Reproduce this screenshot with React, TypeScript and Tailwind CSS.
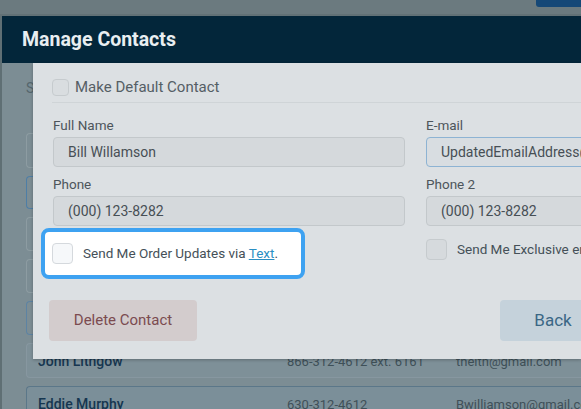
import React from "react"

const font = { fontFamily: "Roboto, 'Liberation Sans', sans-serif" }

function Box({ className = "" }: { className?: string }) {
  return <div className={`shrink-0 rounded-[4px] border ${className}`} />
}

function Field({ label, value, focused }: { label: string; value: string; focused?: boolean }) {
  return (
    <div className="flex flex-col">
      <div className="h-[24px] text-[13.5px] leading-[24px] text-[#4d555b]">{label}</div>
      <div
        className={`h-[30px] rounded-[4px] border px-[14px] text-[14px] leading-[28px] text-[#474f55] whitespace-nowrap overflow-hidden ${
          focused ? "border-[#8db3d3] bg-[#d8dde1]" : "border-[#c3c8cb] bg-[#d5d9dc]"
        }`}
      >
        {value}
      </div>
    </div>
  )
}

function ListRow({
  name,
  phone,
  email,
  className = "",
}: {
  name: string
  phone: string
  email: string
  className?: string
}) {
  return (
    <div
      className={`flex items-center h-[35px] shrink-0 rounded-l-[4px] border border-r-0 pl-[11px] pt-[2px] text-[13px] whitespace-nowrap ${className}`}
    >
      <div className="w-[249px] shrink-0 font-medium text-[14px] text-[#163650]">{name}</div>
      <div className="w-[169px] shrink-0 text-[#3f5058]">{phone}</div>
      <div className="shrink-0 text-[#3f5058]">{email}</div>
    </div>
  )
}

export default function App() {
  return (
    <div className="relative w-[581px] h-[409px] overflow-hidden bg-[#5f6f74]" style={font}>
      {/* page behind the modal */}
      <div className="relative h-[16px] bg-[#6b7a7f] border-b-2 border-[#627176] overflow-hidden">
        <div className="-mt-[18px] text-[22px] leading-[22px] font-bold text-[#1b2a33]">e Dan</div>
        <div className="absolute right-0 top-0 w-[45px] h-[7px] rounded-bl-[3px] bg-[#154877]" />
      </div>

      {/* modal */}
      <div className="ml-[2px] flex flex-col">
        <div className="h-[47px] bg-[#03263a] pl-[20px] flex items-center">
          <span className="text-[19.5px] font-bold text-[#e9eef1]">Manage Contacts</span>
        </div>
        <div className="h-[346px] bg-[#7c8d94] pl-[24px] pt-[16px] flex flex-col overflow-hidden">
          <div className="text-[14px] leading-[18px] text-[#55666d]">Select a Contact</div>
          <div className="mt-[36px] flex flex-col gap-[8px]">
            <div className="h-[35px] shrink-0 rounded-l-[4px] border border-r-0 border-[#8d9ca2]" />
            <div className="h-[33px] shrink-0 rounded-l-[4px] border border-r-0 border-[#4e7ea6]" />
            <div className="h-[34px] shrink-0 rounded-l-[4px] border border-r-0 border-[#8d9ca2]" />
            <div className="h-[34px] shrink-0 rounded-l-[4px] border border-r-0 border-[#8d9ca2]" />
            <div className="h-[34px] shrink-0 rounded-l-[4px] border border-r-0 border-[#5d83a3]" />
            <ListRow
              name="John Lithgow"
              phone="866-312-4612 ext. 6161"
              email="theltn@gmail.com"
              className="border-[#8797a0] bg-[#7e9098]"
            />
            <ListRow
              name="Eddie Murphy"
              phone="630-312-4612"
              email="Bwilliamson@gmail.com"
              className="border-[#5b7789] bg-[#7b8f99]"
            />
          </div>
        </div>
      </div>

      {/* highlighted edit panel */}
      <div className="absolute left-[33px] top-[63px] w-[548px] h-[296px] bg-[#dce0e3] shadow-[0_1px_3px_rgba(0,0,0,0.25)] pl-[19px] pt-[16px]">
        <div className="flex items-center h-[17px]">
          <Box className="w-[17px] h-[17px] border-[#c6cbce] bg-[#d9dde0]" />
          <span className="ml-[6px] text-[15px] leading-[17px] text-[#555e65]">Make Default Contact</span>
        </div>
        <div className="mt-[6px] h-px bg-[#cfd4d7]" />
        <div className="mt-[10px] grid grid-cols-[352px_352px] gap-x-[21px] gap-y-[5px] pl-[1px]">
          <Field label="Full Name" value="Bill Willamson" />
          <Field label="E-mail" value="UpdatedEmailAddress@gmail.com" focused />
          <Field label="Phone" value="(000) 123-8282" />
          <Field label="Phone 2" value="(000) 123-8282" />
          <div className="-ml-[12px] mt-[-3px] w-[264px] h-[51px] rounded-[8px] border-4 border-[#3ea2f1] bg-white flex items-center pl-[7px]">
            <Box className="w-[21px] h-[21px] border-[#d5d9dd] bg-[#f6f8fa]" />
            <span className="ml-[10px] text-[13.5px] text-[#455058] whitespace-nowrap">
              Send Me Order Updates via <span className="text-[#2b8fc3] underline">Text</span>.
            </span>
          </div>
          <div className="flex items-center h-[36px]">
            <Box className="w-[21px] h-[21px] border-[#c6cbce] bg-[#d6dadd]" />
            <span className="ml-[10px] text-[13.5px] text-[#455058] whitespace-nowrap">
              Send Me Exclusive email offers
            </span>
          </div>
        </div>
        <div className="mt-[21px] flex items-center">
          <div className="-ml-[3px] w-[148px] h-[41px] shrink-0 rounded-[4px] bg-[#d3cccd] flex items-center justify-center text-[15px] text-[#7b4b50]">
            Delete Contact
          </div>
          <div className="ml-[303px] w-[106px] h-[41px] shrink-0 rounded-[4px] bg-[#c5d2db] flex items-center justify-center text-[17px] text-[#3a6785]">
            Back
          </div>
        </div>
      </div>
    </div>
  )
}
